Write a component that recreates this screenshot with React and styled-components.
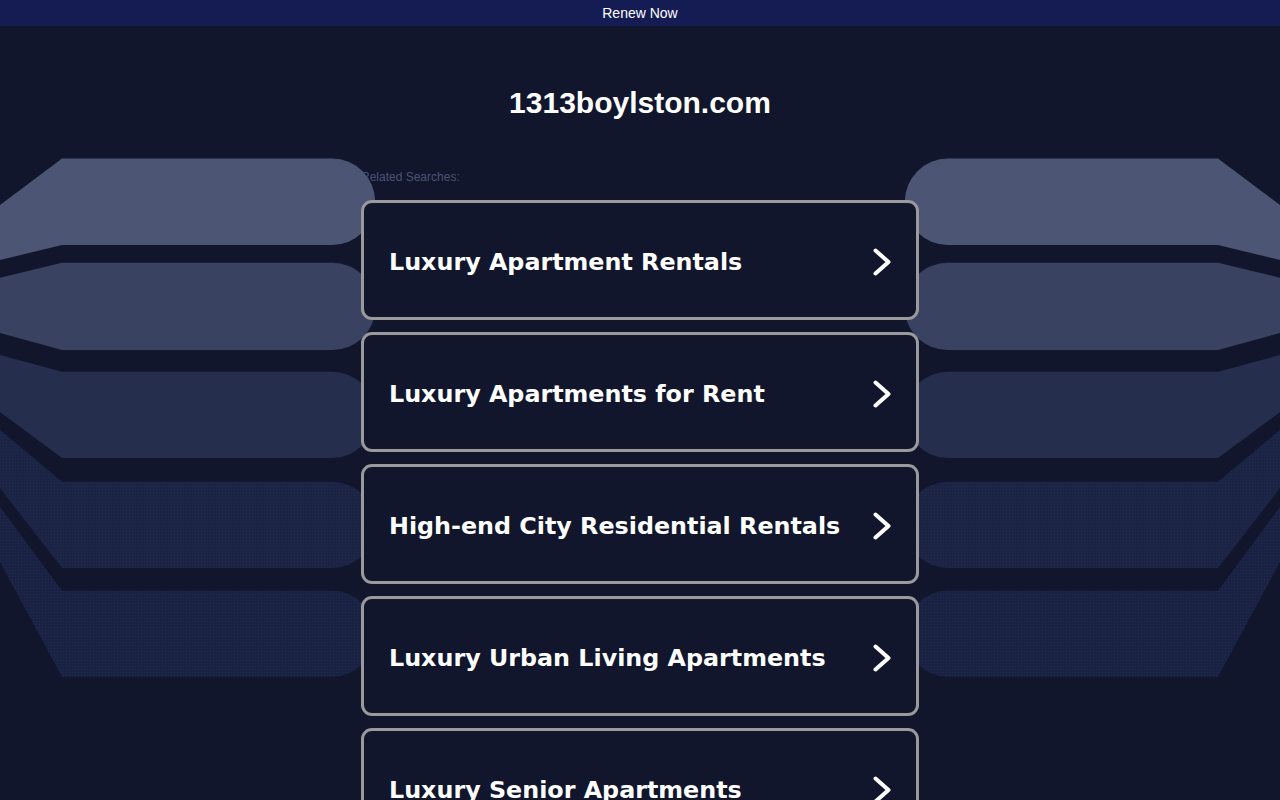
import React from 'react';
import styled, { createGlobalStyle } from 'styled-components';

const GlobalStyle = createGlobalStyle`
  html, body {
    margin: 0;
    padding: 0;
    background-color: #11162c;
    overflow: hidden;
  }
  body {
    font-family: "Liberation Sans", Arial, sans-serif;
  }
`;

/* Styled Components */
const Page = styled.div`
  position: relative;
  min-height: 800px;
  background-color: #11162c;
`;

const TopBar = styled.div`
  height: 26px;
  line-height: 26px;
  background-color: #151b53;
  color: #ffffff;
  font-size: 14px;
  text-align: center;
`;

const Backdrop = styled.div`
  position: absolute;
  top: 0;
  left: 0;
  right: 0;
  height: 800px;
  display: flex;
  justify-content: space-between;
  pointer-events: none;
  z-index: 1;
`;

const Side = styled.svg`
  display: block;
  transform: ${(p) => (p.$mirror ? 'scaleX(-1)' : 'none')};
`;

const Title = styled.h1`
  margin: 60px 0 0;
  font-size: 30px;
  line-height: 34px;
  font-weight: bold;
  color: #ffffff;
  text-align: center;
`;

const Column = styled.div`
  width: 558px;
  margin: 0 auto;
`;

const Label = styled.div`
  margin-top: 50px;
  font-size: 12px;
  line-height: 14px;
  color: #4b5374;
`;

const List = styled.div`
  position: relative;
  z-index: 2;
  display: flex;
  flex-direction: column;
  gap: 12px;
  margin-top: 16px;
`;

const Card = styled.a`
  box-sizing: border-box;
  height: 120px;
  display: flex;
  align-items: center;
  justify-content: space-between;
  padding: 3px 25px 0 25px;
  border: 3px solid #9a9a9c;
  border-radius: 11px;
  background-color: #11162c;
  color: #ffffff;
  text-decoration: none;
  font-family: "DejaVu Sans", Verdana, sans-serif;
  font-weight: bold;
  font-size: 23.8px;
  cursor: pointer;
`;

const shapes = [
  { fill: '#4c5573', d: 'M0,205 L62,158.5 H332 A43.25,43.25 0 0 1 332,245 H62 L0,260 Z' },
  { fill: '#3a4261', d: 'M0,277.7 L62,262.7 H332 A43.65,43.65 0 0 1 332,350 H62 L0,333 Z' },
  { fill: '#262e4e', d: 'M0,355 L62,371.7 H332 A43.15,43.15 0 0 1 332,458 H62 L0,412 Z' },
  { fill: 'url(#dotsA)', d: 'M0,430 L62,481.7 H332 A43.15,43.15 0 0 1 332,568 H62 L0,488 Z' },
  { fill: 'url(#dotsB)', d: 'M0,507 L62,590.7 H332 A43,43 0 0 1 332,676.7 H62 L0,562 Z' },
];

const SideShapes = ({ mirror }) => (
  <Side $mirror={mirror} width="380" height="800" viewBox="0 0 380 800">
    <defs>
      <pattern id="dotsA" width="3" height="3" patternUnits="userSpaceOnUse">
        <rect width="3" height="3" fill="#1c2445" />
        <rect width="1" height="1" fill="#212a4c" />
      </pattern>
      <pattern id="dotsB" width="3" height="3" patternUnits="userSpaceOnUse">
        <rect width="3" height="3" fill="#1a2243" />
        <rect width="1" height="1" fill="#222b4f" />
      </pattern>
    </defs>
    {shapes.map((s, i) => (
      <path key={i} d={s.d} fill={s.fill} />
    ))}
  </Side>
);

const Chevron = () => (
  <svg width="18" height="28" viewBox="0 0 18 28">
    <polyline
      points="2.5,2.5 15.5,14 2.5,25.5"
      fill="none"
      stroke="#ffffff"
      strokeWidth="4"
      strokeLinecap="round"
      strokeLinejoin="round"
    />
  </svg>
);

const searches = [
  'Luxury Apartment Rentals',
  'Luxury Apartments for Rent',
  'High-end City Residential Rentals',
  'Luxury Urban Living Apartments',
  'Luxury Senior Apartments',
];

const App = () => {
  return (
    <>
      <GlobalStyle />
      <Page>
        <TopBar>Renew Now</TopBar>
        <Backdrop>
          <SideShapes />
          <SideShapes mirror />
        </Backdrop>
        <Title>1313boylston.com</Title>
        <Column>
          <Label>Related Searches:</Label>
          <List>
            {searches.map((s) => (
              <Card key={s}>
                <span>{s}</span>
                <Chevron />
              </Card>
            ))}
          </List>
        </Column>
      </Page>
    </>
  );
};

export default App;
